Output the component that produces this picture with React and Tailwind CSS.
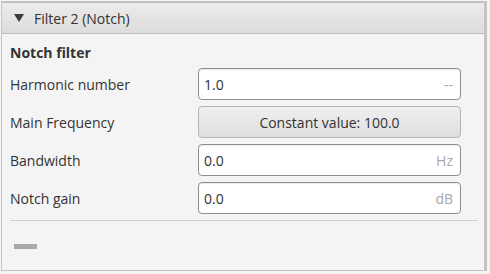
const rows = [
  { label: "Harmonic number", value: "1.0", unit: "--" },
  { label: "Main Frequency", button: "Constant value: 100.0" },
  { label: "Bandwidth", value: "0.0", unit: "Hz" },
  { label: "Notch gain", value: "0.0", unit: "dB" },
];

function Field({ value, unit }) {
  return (
    <div className="flex h-[32px] w-[263px] items-center justify-between rounded-[4px] border border-[#8e8e8e] bg-white pl-[5px] pr-[7px] shadow-[inset_0_1px_1px_rgba(0,0,0,0.08)]">
      <span className="text-[#333]">{value}</span>
      <span className="text-[#a8a8a8]">{unit}</span>
    </div>
  );
}

export default function App() {
  return (
    <div
      className="h-[274px] w-[490px] bg-[#f4f4f4] pl-[1px] pt-[1px] text-[14px] text-[#333]"
      style={{ fontFamily: '"Open Sans", "Noto Sans", sans-serif' }}
    >
      <div className="flex h-[270px] w-[486px] flex-col border border-r-[3px] border-[#c4c4c4] bg-[#f4f4f4]">
        <div className="flex h-[32px] items-center border-t border-b border-[#bdbdbd] bg-gradient-to-b from-[#ececec] to-[#dcdcdc] pl-[12px]">
          <svg width="10" height="8" viewBox="0 0 10 8" className="mr-[10px]">
            <path d="M0 0 L10 0 L5 8 Z" fill="#3a3a3a" />
          </svg>
          <span>Filter 2 (Notch)</span>
        </div>
        <div className="flex flex-1 flex-col px-[8px] pt-[4px]">
          <div className="h-[30px] font-bold leading-[30px]">Notch filter</div>
          <div className="flex flex-col gap-[6px]">
            {rows.map((row) => (
              <div key={row.label} className="flex h-[32px] items-center">
                <span className="w-[188px]">{row.label}</span>
                {row.button ? (
                  <div className="flex h-[32px] w-[263px] items-center justify-center rounded-[4px] border border-[#b4b4b4] bg-gradient-to-b from-[#f0f0f0] to-[#dedede]">
                    {row.button}
                  </div>
                ) : (
                  <Field value={row.value} unit={row.unit} />
                )}
              </div>
            ))}
          </div>
          <div className="mt-[6px] w-[468px] border-t border-[#cfcfcf]" />
          <div className="mt-[23px] ml-[4px] h-[5px] w-[23px] bg-[#a9a9a9]" />
        </div>
      </div>
    </div>
  );
}
